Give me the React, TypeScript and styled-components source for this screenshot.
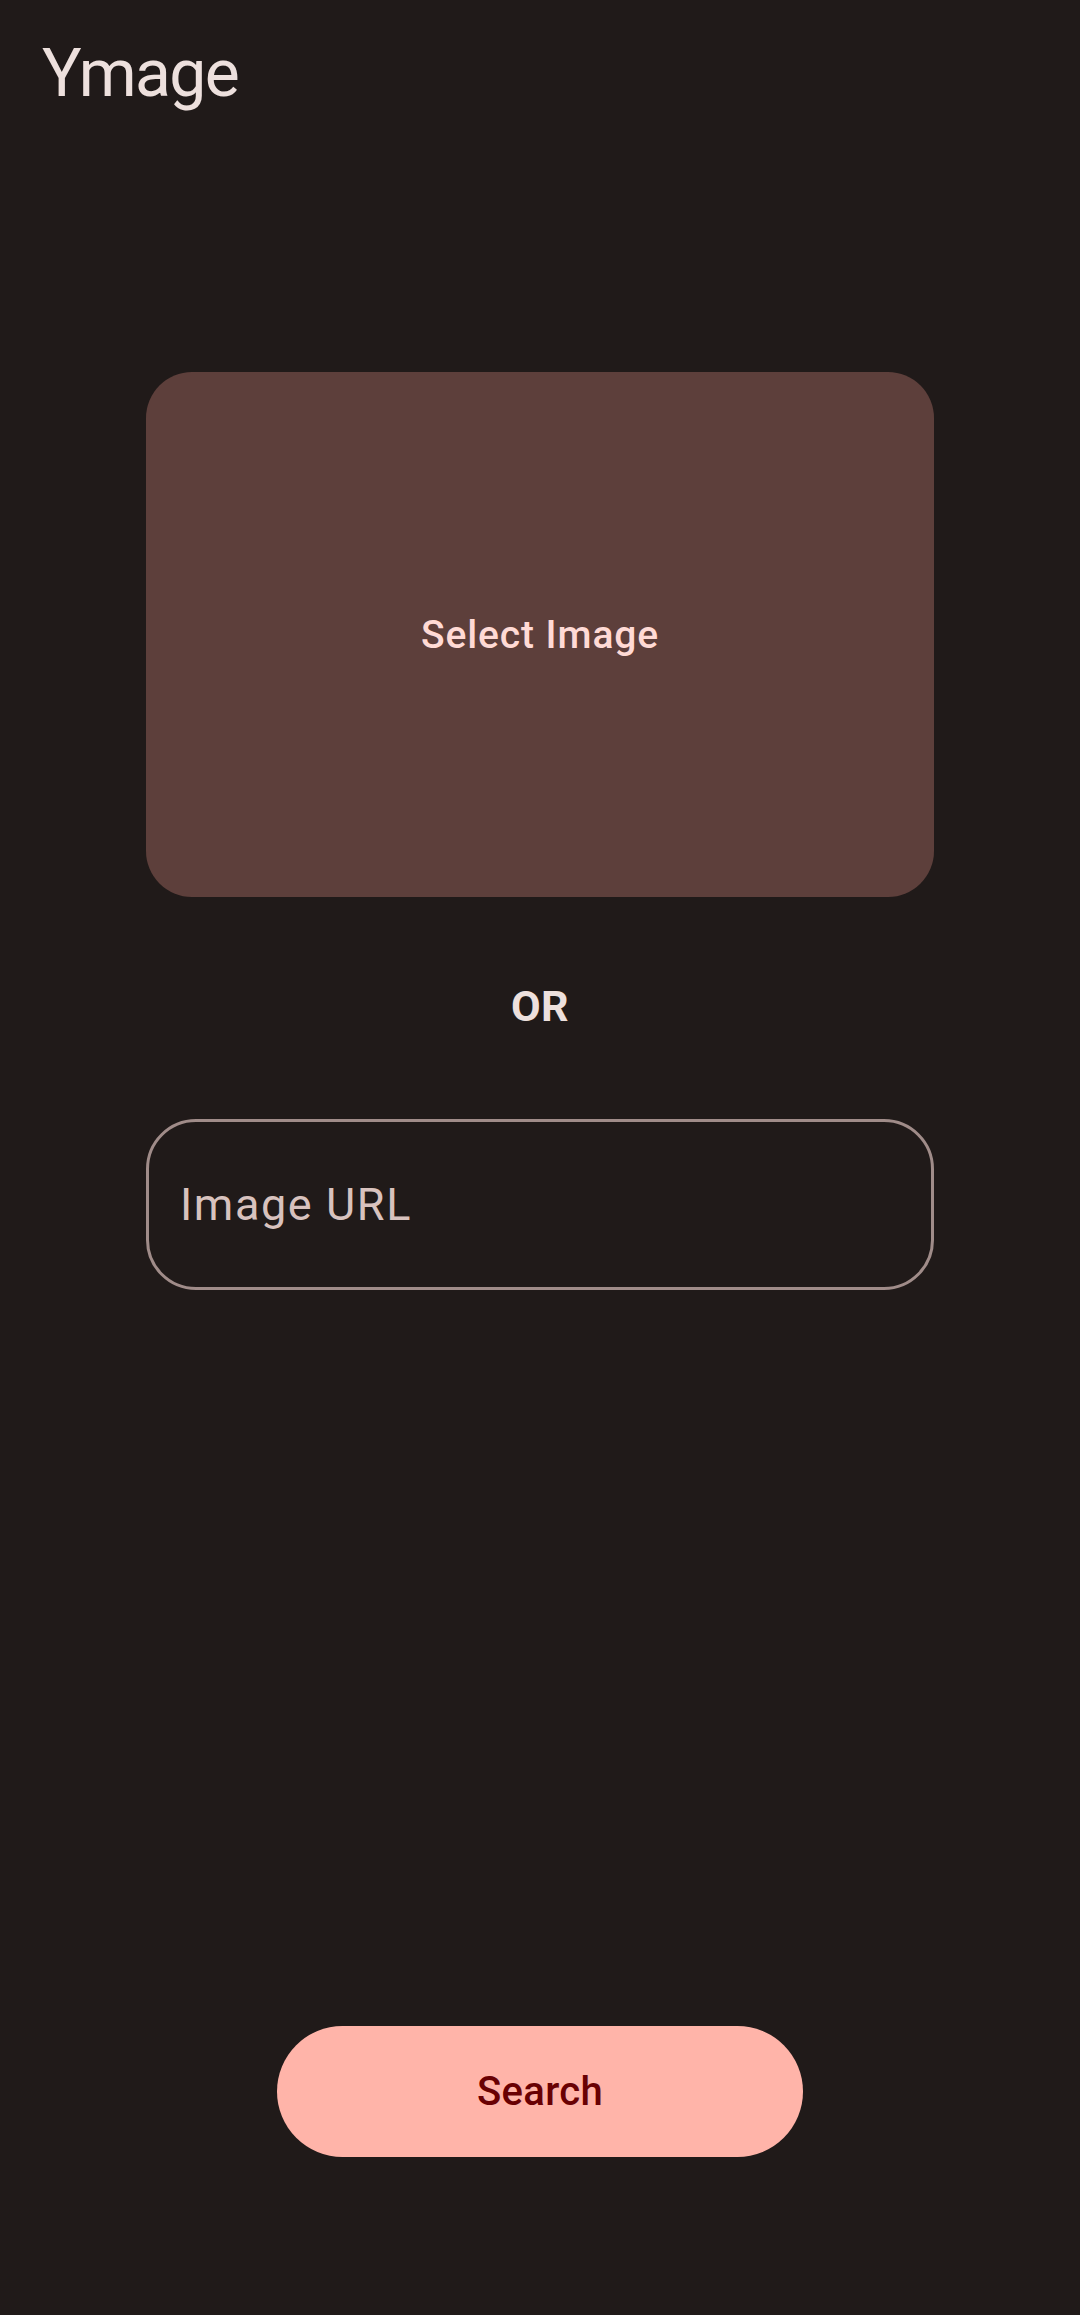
import styled, { createGlobalStyle } from "styled-components";

const GlobalStyle = createGlobalStyle`
    html, body {
        margin: 0;
        padding: 0;
        background: #201a19;
    }
    * {
        box-sizing: border-box;
    }
`;

const Screen = styled.div`
    display: flex;
    flex-direction: column;
    align-items: center;
    width: 1080px;
    height: 2315px;
    background: #201a19;
    font-family: Roboto, "Liberation Sans", sans-serif;
`;

const TopBar = styled.header`
    align-self: stretch;
    padding: 41px 0 0 42px;
`;

const Title = styled.h1`
    margin: 0;
    font-size: 66px;
    line-height: 66px;
    font-weight: 400;
    letter-spacing: -1.6px;
    color: #ede0dd;
`;

const PickerCard = styled.button`
    display: flex;
    align-items: center;
    justify-content: center;
    width: 788px;
    height: 525px;
    margin-top: 265px;
    border: none;
    border-radius: 46px;
    background: #5d3f3b;
    color: #ffdad5;
    font-family: inherit;
    font-size: 39px;
    font-weight: 500;
    letter-spacing: 0.9px;
    cursor: pointer;
`;

const Divider = styled.div`
    margin-top: 88px;
    font-size: 43px;
    line-height: 43px;
    font-weight: 700;
    letter-spacing: 0.5px;
    color: #ede0dd;
`;

const UrlField = styled.input`
    width: 788px;
    height: 171px;
    margin-top: 91px;
    padding: 0 31px;
    border: 3px solid #a08c89;
    border-radius: 50px;
    background: transparent;
    color: #ede0dd;
    font-family: inherit;
    font-size: 45px;
    letter-spacing: 1.6px;
    outline: none;

    &::placeholder {
        color: #d8c2be;
    }
`;

const Spacer = styled.div`
    flex: 1;
`;

const SearchButton = styled.button`
    width: 526px;
    height: 131px;
    margin-bottom: 158px;
    border: none;
    border-radius: 66px;
    background: #ffb4a9;
    color: #690003;
    font-family: inherit;
    font-size: 40px;
    font-weight: 500;
    letter-spacing: 0.3px;
    cursor: pointer;
`;

export default function App() {
    return (
        <>
            <GlobalStyle />
            <Screen>
                <TopBar>
                    <Title>Ymage</Title>
                </TopBar>
                <PickerCard>Select Image</PickerCard>
                <Divider>OR</Divider>
                <UrlField placeholder="Image URL" />
                <Spacer />
                <SearchButton>Search</SearchButton>
            </Screen>
        </>
    );
}
